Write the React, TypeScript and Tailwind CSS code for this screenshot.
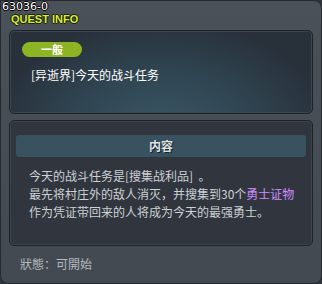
import React from 'react';

const cjk = "font-['Noto_Sans_CJK_SC','Noto_Sans_CJK_TC',sans-serif]";

export default function App() {
  return (
    <div className="w-[322px] h-[284px] bg-[#2f343a]">
      <div className="relative w-[322px] h-[284px] rounded-tr-[8px] rounded-b-[8px] border border-[#262a30] bg-gradient-to-b from-[#4a5159] to-[#434950] flex flex-col">
        {/* caption */}
        <div className="h-[29px] flex flex-col leading-none">
          <span className="pl-[1px] text-[11px] font-['DejaVu_Sans',sans-serif] text-white [text-shadow:1px_0_0_#000,-1px_0_0_#000,0_1px_0_#000,0_-1px_0_#000]">
            63036-0
          </span>
          <span className="pl-[10px] mt-[2px] text-[11px] font-bold font-['Liberation_Sans',sans-serif] text-[#d6ee32] [text-shadow:1px_0_0_#1a1d10,-1px_0_0_#1a1d10,0_1px_0_#1a1d10,0_-1px_0_#1a1d10]">
            QUEST INFO
          </span>
        </div>

        {/* title panel */}
        <div className="mx-[8px] h-[84px] rounded-[5px] border border-[#1e232a] shadow-[inset_0_0_0_1px_#3c4550] bg-[radial-gradient(ellipse_at_50%_125%,#3a5866_0%,#2f4450_45%,#28303a_80%)] px-[12px] pt-[11px]">
          <div className={`w-[60px] h-[15px] rounded-full bg-[#8cb423] flex items-center justify-center text-[11px] font-bold text-white ${cjk}`}>
            一般
          </div>
          <div className={`mt-[11px] pl-[9px] text-[12px] leading-[14px] text-white ${cjk}`}>
            [异逝界]今天的战斗任务
          </div>
        </div>

        {/* content panel */}
        <div className="mx-[8px] mt-[6px] h-[126px] rounded-[5px] border border-[#1e232a] shadow-[inset_0_0_0_1px_#3d434b] bg-[#31363e] px-[6px] pt-[14px]">
          <div className={`h-[22px] rounded-[3px] bg-[#395260] flex items-center justify-center text-[12px] font-bold text-[#dfe3e6] [text-shadow:1px_1px_0_#1a1f24] ${cjk}`}>
            内容
          </div>
          <div className={`mt-[10px] pl-[13px] text-[12px] leading-[18px] text-[#cdd1d5] whitespace-nowrap ${cjk}`}>
            <div>今天的战斗任务是[搜集战利品]&nbsp;&nbsp;。</div>
            <div>
              最先将村庄外的敌人消灭，并搜集到30个<span className="text-[#cf8cff]">勇士证物</span>
            </div>
            <div>作为凭证带回来的人将成为今天的最强勇士。</div>
          </div>
        </div>

        {/* status */}
        <div className={`flex-1 flex items-center pl-[19px] pb-[2px] text-[12px] text-[#b4bac0] ${cjk}`}>
          狀態：可開始
        </div>
      </div>
    </div>
  );
}
